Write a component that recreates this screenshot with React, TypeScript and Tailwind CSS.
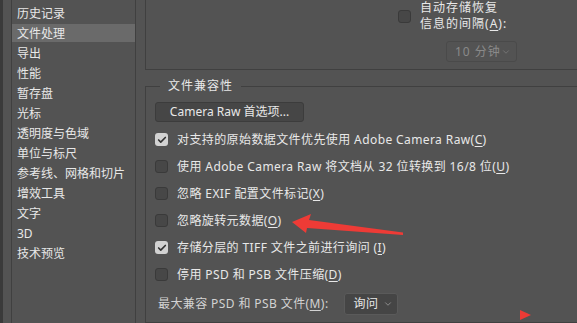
import { Check, ChevronDown } from "lucide-react";

const navItems = [
  "历史记录",
  "文件处理",
  "导出",
  "性能",
  "暂存盘",
  "光标",
  "透明度与色域",
  "单位与标尺",
  "参考线、网格和切片",
  "增效工具",
  "文字",
  "3D",
  "技术预览",
];

function Box({ checked }: { checked?: boolean }) {
  return checked ? (
    <span className="flex h-[13px] w-[13px] shrink-0 items-center justify-center rounded-[3px] bg-[#d2d2d2]">
      <Check size={10} strokeWidth={4} className="text-[#333]" />
    </span>
  ) : (
    <span className="h-[13px] w-[13px] shrink-0 rounded-[3px] border border-[#3a3a3a] bg-[#474747]" />
  );
}

function Key({ k }: { k: string }) {
  return (
    <>
      (<span className="underline underline-offset-2">{k}</span>)
    </>
  );
}

function Row({ checked, children }: { checked?: boolean; children: React.ReactNode }) {
  return (
    <div className="flex h-[27px] items-center gap-[9px] pl-[8px]">
      <Box checked={checked} />
      <span className="whitespace-nowrap">{children}</span>
    </div>
  );
}

export default function App() {
  return (
    <div className="relative flex h-[323px] w-[577px] overflow-hidden bg-[#535353] font-['Noto_Sans','Noto_Sans_CJK_SC',sans-serif] text-[12px] text-[#e8e8e8]">
      <div className="w-[3px] bg-[#3a3a3a]" />
      <div className="w-[8px]" />

      {/* left list */}
      <div className="w-[125px] shrink-0 border-x border-[#404040] pt-[4px]">
        {navItems.map((item) => (
          <div
            key={item}
            className={`mb-[2px] flex h-[18px] items-center whitespace-nowrap pl-[5px] pt-[2px] leading-none ${
              item === "文件处理" ? "bg-[#6a6a6a]" : ""
            }`}
          >
            {item}
          </div>
        ))}
      </div>

      {/* right side */}
      <div className="flex min-w-0 flex-1 flex-col pl-[9px]">
        <div className="-mr-[40px] h-[70px] shrink-0 border-b border-l border-[#404040]">
          <div className="flex items-center gap-[9px] pl-[252px]">
            <Box />
            <div className="tracking-[1px] leading-[16px]">
              <div>自动存储恢复</div>
              <div>
                信息的间隔<Key k="A" />:
              </div>
            </div>
          </div>
          <div className="mt-[9px] ml-[300px] flex h-[21px] w-[71px] items-center justify-between rounded-[3px] border border-[#4a4a4a] pl-[8px] pr-[5px] tracking-[1px] text-[#8a8a8a]">
            <span>10 分钟</span>
            <ChevronDown size={10} className="text-[#7a7a7a]" />
          </div>
        </div>

        <fieldset className="-mr-[40px] mt-[8px] h-[245px] shrink-0 border border-[#404040] p-0 tracking-[0.4px]">
          <legend className="ml-[14px] px-[8px] leading-[16px] tracking-[1px]">文件兼容性</legend>
          <div className="pl-[1px]">
            <div className="ml-[8px] mt-[8px] flex h-[20px] w-[149px] items-center justify-center rounded-[3px] border border-[#3c3c3c] bg-[#464646] tracking-normal">
              Camera Raw 首选项...
            </div>
            <div className="mt-[4px]">
              <Row checked>
                对支持的原始数据文件优先使用 Adobe Camera Raw<Key k="C" />
              </Row>
              <Row>
                使用 Adobe Camera Raw 将文档从 32 位转换到 16/8 位<Key k="U" />
              </Row>
              <Row>
                忽略 EXIF 配置文件标记<Key k="X" />
              </Row>
              <Row>
                忽略旋转元数据<Key k="O" />
              </Row>
              <Row checked>
                存储分层的 TIFF 文件之前进行询问 <Key k="I" />
              </Row>
              <Row>
                停用 PSD 和 PSB 文件压缩<Key k="D" />
              </Row>
              <div className="flex h-[29px] items-center gap-[15px] pl-[11px] pt-[3px]">
                <span className="whitespace-nowrap text-[#d2d2d2]">
                  最大兼容 PSD 和 PSB 文件<Key k="M" />:
                </span>
                <div className="flex h-[22px] w-[54px] items-center justify-between rounded-[3px] border border-[#5a5a5a] bg-[#454545] pl-[9px] pr-[4px]">
                  <span>询问</span>
                  <ChevronDown size={10} className="text-[#999]" />
                </div>
              </div>
            </div>
          </div>
        </fieldset>
      </div>

      {/* annotation overlay */}
      <svg className="pointer-events-none absolute left-0 top-0" width="577" height="323">
        <polygon
          points="292,222 311,214 309,220 403,232.5 403,235 307,228 306,233"
          fill="#ee3b36"
        />
        <polygon points="520,310 531,315 520,320" fill="#ee3b36" />
      </svg>
    </div>
  );
}
